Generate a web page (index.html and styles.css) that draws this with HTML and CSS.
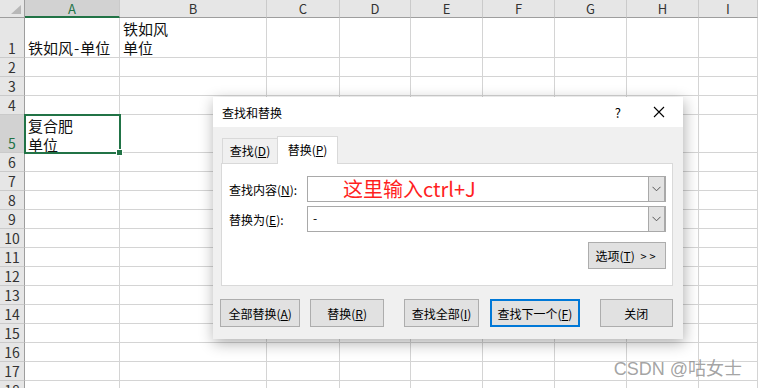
FILE: index.html
```html
<!DOCTYPE html>
<html lang="zh-CN">
	<head>
		<meta charset="UTF-8">
		<meta name="viewport" content="width=device-width,initial-scale=1">
		<title>查找和替换</title>
		<link rel="stylesheet" href="styles.css">
	</head>
	<body>
		<div class="screen">
			<div class="sheet">
				<div class="hd corner"></div><div class="hd col is-sel">A</div><div class="hd col">B</div><div class="hd col">C</div><div class="hd col">D</div><div class="hd col">E</div><div class="hd col">F</div><div class="hd col">G</div><div class="hd col">H</div><div class="hd col">I</div>
				<div class="hd num">1</div><div class="c"><span>铁如风<span class="dash">-</span>单位</span></div><div class="c">铁如风<br>单位</div><div class="c"></div><div class="c"></div><div class="c"></div><div class="c"></div><div class="c"></div><div class="c"></div><div class="c"></div>
				<div class="hd num">2</div><div class="c"></div><div class="c"></div><div class="c"></div><div class="c"></div><div class="c"></div><div class="c"></div><div class="c"></div><div class="c"></div><div class="c"></div>
				<div class="hd num">3</div><div class="c"></div><div class="c"></div><div class="c"></div><div class="c"></div><div class="c"></div><div class="c"></div><div class="c"></div><div class="c"></div><div class="c"></div>
				<div class="hd num">4</div><div class="c"></div><div class="c"></div><div class="c"></div><div class="c"></div><div class="c"></div><div class="c"></div><div class="c"></div><div class="c"></div><div class="c"></div>
				<div class="hd num is-sel">5</div><div class="c c--sel">复合肥<br>单位</div><div class="c"></div><div class="c"></div><div class="c"></div><div class="c"></div><div class="c"></div><div class="c"></div><div class="c"></div><div class="c"></div>
				<div class="hd num">6</div><div class="c"></div><div class="c"></div><div class="c"></div><div class="c"></div><div class="c"></div><div class="c"></div><div class="c"></div><div class="c"></div><div class="c"></div>
				<div class="hd num">7</div><div class="c"></div><div class="c"></div><div class="c"></div><div class="c"></div><div class="c"></div><div class="c"></div><div class="c"></div><div class="c"></div><div class="c"></div>
				<div class="hd num">8</div><div class="c"></div><div class="c"></div><div class="c"></div><div class="c"></div><div class="c"></div><div class="c"></div><div class="c"></div><div class="c"></div><div class="c"></div>
				<div class="hd num">9</div><div class="c"></div><div class="c"></div><div class="c"></div><div class="c"></div><div class="c"></div><div class="c"></div><div class="c"></div><div class="c"></div><div class="c"></div>
				<div class="hd num">10</div><div class="c"></div><div class="c"></div><div class="c"></div><div class="c"></div><div class="c"></div><div class="c"></div><div class="c"></div><div class="c"></div><div class="c"></div>
				<div class="hd num">11</div><div class="c"></div><div class="c"></div><div class="c"></div><div class="c"></div><div class="c"></div><div class="c"></div><div class="c"></div><div class="c"></div><div class="c"></div>
				<div class="hd num">12</div><div class="c"></div><div class="c"></div><div class="c"></div><div class="c"></div><div class="c"></div><div class="c"></div><div class="c"></div><div class="c"></div><div class="c"></div>
				<div class="hd num">13</div><div class="c"></div><div class="c"></div><div class="c"></div><div class="c"></div><div class="c"></div><div class="c"></div><div class="c"></div><div class="c"></div><div class="c"></div>
				<div class="hd num">14</div><div class="c"></div><div class="c"></div><div class="c"></div><div class="c"></div><div class="c"></div><div class="c"></div><div class="c"></div><div class="c"></div><div class="c"></div>
				<div class="hd num">15</div><div class="c"></div><div class="c"></div><div class="c"></div><div class="c"></div><div class="c"></div><div class="c"></div><div class="c"></div><div class="c"></div><div class="c"></div>
				<div class="hd num">16</div><div class="c"></div><div class="c"></div><div class="c"></div><div class="c"></div><div class="c"></div><div class="c"></div><div class="c"></div><div class="c"></div><div class="c"></div>
				<div class="hd num">17</div><div class="c"></div><div class="c"></div><div class="c"></div><div class="c"></div><div class="c"></div><div class="c"></div><div class="c"></div><div class="c"></div><div class="c"></div>
				<div class="hd num">18</div><div class="c"></div><div class="c"></div><div class="c"></div><div class="c"></div><div class="c"></div><div class="c"></div><div class="c"></div><div class="c"></div><div class="c"></div>
			</div>

			<div class="dialog">
				<div class="dialog__title">
					<span class="dialog__name">查找和替换</span>
					<span class="dialog__help">?</span>
					<svg class="dialog__close" width="12" height="12" viewBox="0 0 12 12"><path d="M1 1L11 11M11 1L1 11" stroke="#000" stroke-width="1.1" fill="none"/></svg>
				</div>
				<div class="dialog__body">
					<div class="tabs">
						<div class="tab">查找(<u>D</u>)</div>
						<div class="tab tab--active">替换(<u>P</u>)</div>
					</div>
					<div class="panel">
						<div class="field">
							<span class="field__label">查找内容(<u>N</u>):</span>
							<div class="combo">
								<span class="combo__text combo__text--note">这里输入ctrl+J</span>
								<span class="combo__drop"><svg width="9" height="6" viewBox="0 0 9 6"><path d="M0.5 0.8L4.5 4.8L8.5 0.8" stroke="#555" stroke-width="1" fill="none"/></svg></span>
							</div>
						</div>
						<div class="field">
							<span class="field__label">替换为(<u>E</u>):</span>
							<div class="combo">
								<span class="combo__text">-</span>
								<span class="combo__drop"><svg width="9" height="6" viewBox="0 0 9 6"><path d="M0.5 0.8L4.5 4.8L8.5 0.8" stroke="#555" stroke-width="1" fill="none"/></svg></span>
							</div>
						</div>
						<div class="panel__opts">
							<div class="btn btn--opts">选项(<u>T</u>) <span class="arrows">&gt;&gt;</span></div>
						</div>
					</div>
					<div class="actions">
						<div class="btn btn--all">全部替换(<u>A</u>)</div>
						<div class="btn btn--one">替换(<u>R</u>)</div>
						<div class="btn btn--findall">查找全部(<u>I</u>)</div>
						<div class="btn btn--next">查找下一个(<u>F</u>)</div>
						<div class="btn btn--close">关闭</div>
					</div>
				</div>
			</div>

			<div class="watermark">CSDN @咕女士</div>
		</div>
	</body>
</html>
```

FILE: styles.css
```css
body
{
	margin: 0;
	font-family: "Noto Sans CJK SC", "Noto Sans", sans-serif;
	background: #fff;
	overflow: hidden;
}

.screen
{
	position: relative;
	width: 758px;
	height: 388px;
	overflow: hidden;
}

/* sheet */
.sheet
{
	display: grid;
	grid-template-columns: 25px 95px 147px 73px 71px 72px 72px 72px 72px 59px;
	grid-template-rows: 18px 40px 19px 19px 19px 38px repeat(13, 19px);
}

.hd
{
	box-sizing: border-box;
	background: #e6e6e6;
	border-right: 1px solid #cacaca;
	border-bottom: 1px solid #cacaca;
	color: #333;
	display: flex;
	align-items: center;
	justify-content: center;
}

.col
{
	font-size: 13px;
	border-bottom-color: #9e9e9e;
}

.col.is-sel
{
	background: #d2d2d2;
	color: #217346;
	border-bottom: 2px solid #217346;
}

.num
{
	font-size: 14px;
	line-height: 18px;
	align-items: flex-end;
	border-right-color: #9e9e9e;
}

.num.is-sel
{
	background: #d2d2d2;
	color: #217346;
}

.corner
{
	position: relative;
	border-bottom-color: #9e9e9e;
	border-right-color: #9e9e9e;
}

.corner::after
{
	content: "";
	position: absolute;
	right: 3px;
	bottom: 3px;
	width: 10px;
	height: 9px;
	background: #b8b8b8;
	clip-path: polygon(100% 0, 100% 100%, 0 100%);
}

.c
{
	box-sizing: border-box;
	border-right: 1px solid #d4d4d4;
	border-bottom: 1px solid #d4d4d4;
	padding-left: 3px;
	font-size: 15px;
	line-height: 19px;
	color: #111;
	white-space: nowrap;
	display: flex;
	flex-direction: column;
	justify-content: flex-end;
}

.dash
{
	margin: 0 1px;
}

.c--sel
{
	position: relative;
	z-index: 1;
	display: block;
	padding-top: 1px;
}

.c--sel::before
{
	content: "";
	position: absolute;
	left: -1px;
	top: -1px;
	right: -2px;
	bottom: -2px;
	border: 2px solid #217346;
}

.c--sel::after
{
	content: "";
	position: absolute;
	right: -4px;
	bottom: -4px;
	width: 5px;
	height: 5px;
	background: #217346;
	border: 1px solid #fff;
}

/* dialog */
.dialog
{
	position: absolute;
	left: 213px;
	top: 97px;
	width: 470px;
	height: 242px;
	background: #f0f0f0;
	box-shadow: 1px 4px 14px rgba(0, 0, 0, 0.32);
	font-size: 12px;
	color: #000;
	z-index: 2;
}

.dialog__title
{
	height: 30px;
	background: #fff;
	display: flex;
	align-items: center;
	padding-left: 9px;
}

.dialog__name
{
	flex: 1;
}

.dialog__help
{
	font-size: 13px;
	margin-right: 32px;
}

.dialog__close
{
	margin-right: 18px;
}

.dialog__body
{
	padding: 9px 10px 0 8px;
}

u
{
	text-underline-offset: 1px;
}

.tabs
{
	display: flex;
	align-items: flex-end;
	height: 27px;
	padding-left: 1px;
}

.tab
{
	box-sizing: border-box;
	width: 55px;
	height: 25px;
	line-height: 24px;
	text-align: center;
	border: 1px solid #d9d9d9;
	border-bottom: none;
	border-right: none;
}

.tab--active
{
	width: 61px;
	height: 28px;
	line-height: 26px;
	background: #fff;
	border-right: 1px solid #d9d9d9;
	margin-bottom: -1px;
	position: relative;
	z-index: 1;
}

.panel
{
	box-sizing: border-box;
	height: 123px;
	background: #fff;
	border: 1px solid #d9d9d9;
	padding: 12px 6px 0 7px;
}

.field
{
	display: flex;
	align-items: center;
	height: 26px;
	margin-bottom: 4px;
}

.field__label
{
	width: 78px;
	flex: none;
}

.combo
{
	box-sizing: border-box;
	flex: 1;
	height: 26px;
	display: flex;
	border: 1px solid #a9a9a9;
	background: #fff;
}

.combo__text
{
	flex: 1;
	padding-left: 5px;
	line-height: 22px;
}

.combo__text--note
{
	padding-left: 35px;
	font-size: 20px;
	color: #ff1f1f;
	line-height: 23px;
}

.combo__drop
{
	box-sizing: border-box;
	width: 17px;
	background: #e3e3e3;
	border-left: 1px solid #a9a9a9;
	border-right: 1px solid #a9a9a9;
	display: flex;
	align-items: center;
	justify-content: center;
}

.panel__opts
{
	display: flex;
	justify-content: flex-end;
	margin-top: 10px;
}

.btn
{
	box-sizing: border-box;
	height: 28px;
	background: #e1e1e1;
	border: 1px solid #adadad;
	display: flex;
	align-items: center;
	justify-content: center;
	white-space: pre;
}

.btn--opts
{
	width: 78px;
	height: 27px;
}

.arrows
{
	letter-spacing: 3px;
	margin-left: 3px;
	font-size: 11px;
}

.actions
{
	display: flex;
	margin-top: 13px;
	margin-left: -1px;
}

.btn--all
{
	width: 81px;
}

.btn--one
{
	width: 74px;
	margin-left: 10px;
}

.btn--findall
{
	width: 76px;
	margin-left: 20px;
}

.btn--next
{
	width: 90px;
	margin-left: 11px;
	border: 2px solid #0078d7;
}

.btn--close
{
	width: 74px;
	margin-left: 20px;
}

.watermark
{
	position: absolute;
	right: 16px;
	bottom: 8px;
	font-family: "Liberation Sans", "Noto Sans CJK SC", sans-serif;
	font-size: 18px;
	line-height: 22px;
	color: rgba(140, 140, 140, 0.8);
	z-index: 3;
}
```
